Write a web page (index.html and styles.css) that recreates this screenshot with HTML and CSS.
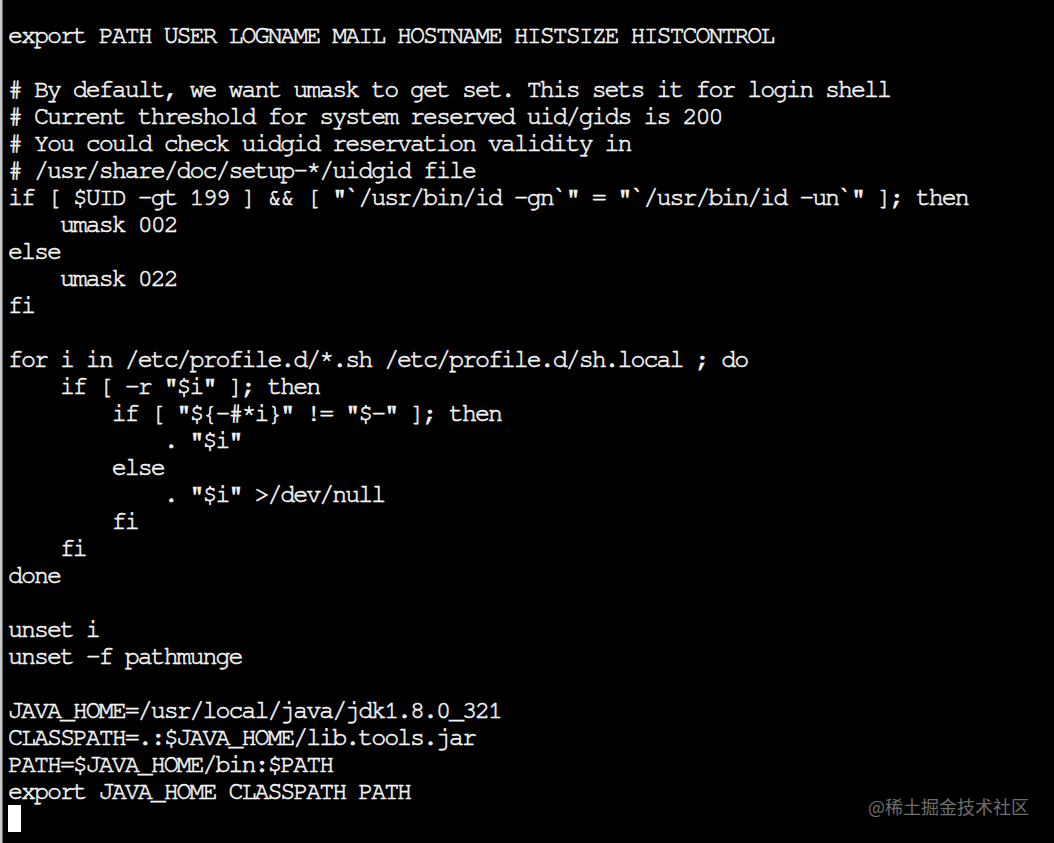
FILE: index.html
```html
<!DOCTYPE html>
<html lang="zh">
<head>
<meta charset="utf-8">
<title>profile</title>
<link rel="stylesheet" href="styles.css">
</head>
<body>
<div class="window">
<div class="term">
<pre class="code">export PATH USER LOGNAME MAIL HOSTNAME HISTSIZE HISTCONTROL

# By default, we want umask to get set. This sets it for login shell
# Current threshold for system reserved uid/gids is 200
# You could check uidgid reservation validity in
# /usr/share/doc/setup-*/uidgid file
if [ $UID -gt 199 ] &amp;&amp; [ "`/usr/bin/id -gn`" = "`/usr/bin/id -un`" ]; then
    umask 002
else
    umask 022
fi

for i in /etc/profile.d/*.sh /etc/profile.d/sh.local ; do
    if [ -r "$i" ]; then
        if [ "${-#*i}" != "$-" ]; then
            . "$i"
        else
            . "$i" &gt;/dev/null
        fi
    fi
done

unset i
unset -f pathmunge

JAVA_HOME=/usr/local/java/jdk1.8.0_321
CLASSPATH=.:$JAVA_HOME/lib.tools.jar
PATH=$JAVA_HOME/bin:$PATH
export JAVA_HOME CLASSPATH PATH
<span class="cursor"> </span></pre>
</div>
<div class="watermark">@稀土掘金技术社区</div>
</div>
</body>
</html>
```
FILE: styles.css
```css
html, body {
  margin: 0;
  padding: 0;
  background: #000;
}
.window {
  position: relative;
  width: 1054px;
  height: 843px;
  overflow: hidden;
  background: #000;
  border-left: 2px solid #c8c8c8;
  box-sizing: border-box;
}
.term {
  height: 100%;
  border-left: 1px solid #6a6a6a;
  padding: 22px 0 0 5px;
  box-sizing: border-box;
}
.code {
  margin: 0;
  font-family: "Nimbus Mono PS", "Nimbus Mono L", "FreeMono", "Courier 10 Pitch", "Liberation Mono", monospace;
  font-size: 25px;
  letter-spacing: -2.03px;
  line-height: 27px;
  color: #f2f2f2;
  -webkit-text-stroke: 0.6px #f2f2f2;
}
.cursor {
  display: inline-block;
  width: 13px;
  height: 27px;
  background: #fff;
  vertical-align: top;
  letter-spacing: 0;
  -webkit-text-stroke: 0;
}
.watermark {
  position: absolute;
  right: 25px;
  bottom: 26px;
  font-family: "Noto Sans CJK SC", sans-serif;
  font-size: 18px;
  line-height: 22px;
  color: #6e6e6e;
}
```
